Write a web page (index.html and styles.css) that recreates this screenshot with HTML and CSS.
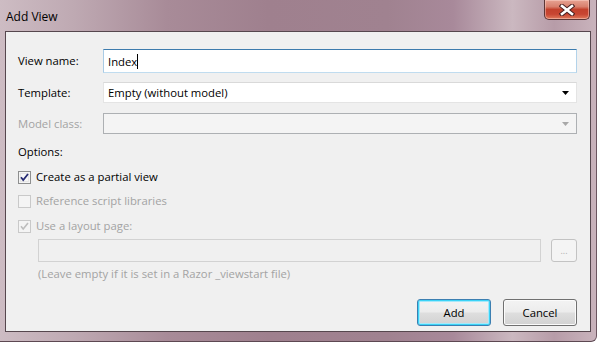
FILE: index.html
```html
<!DOCTYPE html>
<html>
<head>
<meta charset="utf-8">
<title>Add View</title>
<link rel="stylesheet" href="styles.css">
</head>
<body>
<div class="window">
  <div class="titlebar">
    <span class="title">Add View</span>
    <div class="close">
      <svg width="16" height="12" viewBox="0 0 16 12">
        <path d="M3 2 L13 10 M13 2 L3 10" stroke="#4a2020" stroke-width="4.6" stroke-linecap="square" fill="none"/>
        <path d="M3 2 L13 10 M13 2 L3 10" stroke="#ffffff" stroke-width="2.6" stroke-linecap="square" fill="none"/>
      </svg>
    </div>
  </div>
  <div class="client">
    <div class="row row-name">
      <label class="label">View name:</label>
      <div class="textbox focused"><span class="caret">Index</span></div>
    </div>
    <div class="row row-template">
      <label class="label">Template:</label>
      <div class="combo">
        <span class="combo-text">Empty (without model)</span>
        <svg class="arrow" width="7" height="4" viewBox="0 0 7 4"><path d="M0 0 H7 L3.5 4 Z" fill="#000"/></svg>
      </div>
    </div>
    <div class="row row-model">
      <label class="label disabled">Model class:</label>
      <div class="combo combo-disabled">
        <span class="combo-text"></span>
        <svg class="arrow" width="7" height="4" viewBox="0 0 7 4"><path d="M0 0 H7 L3.5 4 Z" fill="#a8a8a8"/></svg>
      </div>
    </div>
    <div class="options-title">Options:</div>
    <div class="check-row first">
      <svg class="checkbox" width="13" height="13" viewBox="0 0 13 13">
        <rect x="0.5" y="0.5" width="12" height="12" fill="#f4f4f4" stroke="#8e8f8f"/>
        <rect x="2" y="2" width="9" height="9" fill="#e6e6e6"/>
        <rect x="3" y="3" width="7" height="7" fill="#f7f7f7"/>
        <path d="M3 6.3 L5.2 9 L10 3" stroke="#262b73" stroke-width="1.8" fill="none"/>
      </svg>
      <span class="check-label">Create as a partial view</span>
    </div>
    <div class="check-row second">
      <svg class="checkbox" width="13" height="13" viewBox="0 0 13 13">
        <rect x="0.5" y="0.5" width="12" height="12" fill="#f4f4f4" stroke="#c9c9c9"/>
      </svg>
      <span class="check-label disabled">Reference script libraries</span>
    </div>
    <div class="check-row third">
      <svg class="checkbox" width="13" height="13" viewBox="0 0 13 13">
        <rect x="0.5" y="0.5" width="12" height="12" fill="#f4f4f4" stroke="#c9c9c9"/>
        <path d="M3 6.3 L5.2 9 L10 3" stroke="#bdbdbd" stroke-width="1.6" fill="none"/>
      </svg>
      <span class="check-label disabled">Use a layout page:</span>
    </div>
    <div class="layout-row">
      <div class="textbox textbox-disabled"></div>
      <div class="browse">...</div>
    </div>
    <div class="hint">(Leave empty if it is set in a Razor _viewstart file)</div>
    <div class="buttons">
      <div class="button default">Add</div>
      <div class="button">Cancel</div>
    </div>
  </div>
</div>
</body>
</html>
```
FILE: styles.css
```css
html, body {
  margin: 0;
  padding: 0;
}
body {
  width: 597px;
  height: 342px;
  overflow: hidden;
  font-family: "Open Sans", "Segoe UI", "Liberation Sans", sans-serif;
  font-size: 11.3px;
  color: #000;
  background: #ffffff;
}
.window {
  width: 597px;
  height: 342px;
  box-sizing: border-box;
  border-right: 1px solid #6c5560;
  border-bottom: 1px solid #5d4852;
  border-radius: 0 0 6px 0;
  background:
    linear-gradient(90deg, #cdbcc3 0%, #bfaab3 12%, #a88b98 28%, #9f808e 45%, #a08290 65%, #a8899a 76%, #cbb8c0 86%, #b79ca8 93%, #c9b3bc 100%);
  display: flex;
  flex-direction: column;
}
.titlebar {
  height: 31px;
  display: flex;
  align-items: flex-start;
  padding-left: 6px;
  flex: none;
}
.title {
  font-size: 12px;
  line-height: 16px;
  padding-top: 9px;
  color: #000;
}
.close {
  margin-left: auto;
  margin-right: 6px;
  width: 46px;
  height: 20px;
  box-sizing: border-box;
  border: 1px solid #5b3636;
  border-top: none;
  border-radius: 0 0 5px 5px;
  background: linear-gradient(180deg, #e7a393 0%, #d8806d 35%, #c3412c 50%, #c84632 75%, #e07a5c 100%);
  box-shadow: inset 0 0 0 1px rgba(255,220,210,0.45);
  display: flex;
  align-items: center;
  justify-content: center;
}
.client {
  height: 301px;
  margin: 0 5px 0 5px;
  box-sizing: border-box;
  border: 1px solid #56474e;
  background: #f0f0f0;
  padding: 17px 13px 0 12px;
  display: flex;
  flex-direction: column;
}
.row {
  display: flex;
  align-items: center;
}
.row-template { margin-top: 9px; }
.row-model { margin-top: 10px; }
.label {
  width: 85px;
  flex: none;
  line-height: 16px;
}
.disabled {
  color: #a3a3a3;
}
.textbox {
  flex: 1;
  height: 24px;
  box-sizing: border-box;
  border: 1px solid #abadb3;
  background: #fff;
  padding-left: 4px;
  display: flex;
  align-items: center;
}
.textbox.focused {
  border-color: #a9cbe5 #b3d3ea #c0dcef #a9cbe5;
  border-top-color: #3d7bad;
}
.caret {
  border-right: 1px solid #000;
  line-height: 15px;
}
.combo {
  flex: 1;
  height: 21px;
  box-sizing: border-box;
  border: 1px solid #e4e4e4;
  border-top-color: #d9d9d9;
  background: #fff;
  padding-left: 4px;
  padding-right: 7px;
  display: flex;
  align-items: center;
}
.combo-text {
  flex: 1;
}
.combo-disabled {
  background: #f4f4f4;
  border-color: #adb0b3;
}
.options-title {
  margin-top: 10px;
  line-height: 16px;
}
.check-row {
  display: flex;
  align-items: center;
  height: 16px;
}
.check-row.first { margin-top: 9px; }
.check-row.second { margin-top: 8px; }
.check-row.third { margin-top: 9px; }
.checkbox {
  flex: none;
  margin-right: 5px;
}
.check-label {
  line-height: 16px;
}
.layout-row {
  display: flex;
  margin-top: 5px;
  margin-left: 20px;
}
.textbox-disabled {
  height: 23px;
  background: #f0f0f0;
  border-color: #d2d2d2;
  margin-right: 10px;
}
.browse {
  width: 26px;
  height: 23px;
  box-sizing: border-box;
  border: 1px solid #c3c3c3;
  border-radius: 3px;
  background: #f4f4f4;
  color: #b0b0b0;
  font-size: 9px;
  display: flex;
  align-items: center;
  justify-content: center;
  line-height: 1;
}
.hint {
  margin-top: 4px;
  margin-left: 20px;
  line-height: 16px;
  color: #a3a3a3;
}
.buttons {
  margin-top: 17px;
  display: flex;
  justify-content: flex-end;
  gap: 12px;
}
.button {
  width: 74px;
  height: 27px;
  box-sizing: border-box;
  border: 1px solid #707070;
  border-radius: 3px;
  background: linear-gradient(180deg, #f3f3f3 0%, #ececec 48%, #dedede 52%, #d2d2d2 100%);
  box-shadow: inset 0 0 0 1px #fbfbfb;
  display: flex;
  align-items: center;
  justify-content: center;
  line-height: 16px;
}
.button.default {
  border-color: #3c7fb1;
  box-shadow: inset 0 0 0 1px #3cd3f6, inset 0 0 0 2px #a6e8fa;
}
```
